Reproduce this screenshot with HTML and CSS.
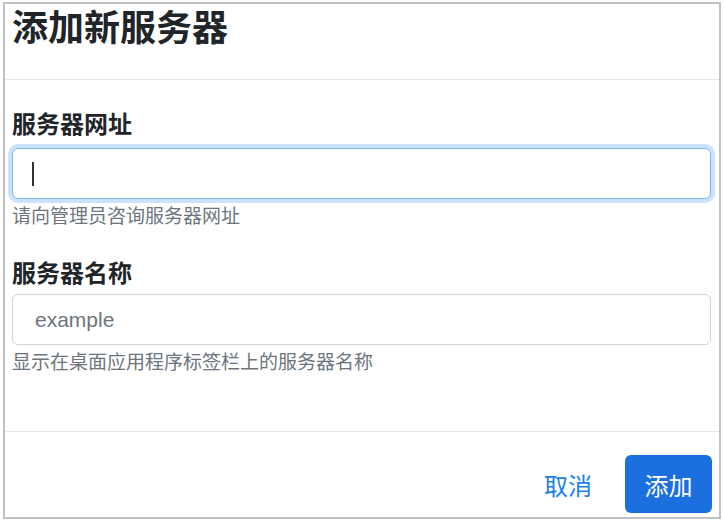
FILE: index.html
```html
<!DOCTYPE html>
<html lang="zh-CN">
<head>
<meta charset="utf-8">
<title>添加新服务器</title>
<link rel="stylesheet" href="styles.css">
</head>
<body>
<div class="modal">
  <div class="modal-header">
    <h4 class="modal-title">添加新服务器</h4>
  </div>
  <div class="modal-body">
    <div class="group first">
      <label class="label">服务器网址</label>
      <div class="field">
        <input class="input focused" type="text">
        <span class="caret"></span>
      </div>
      <div class="help">请向管理员咨询服务器网址</div>
    </div>
    <div class="group second">
      <label class="label">服务器名称</label>
      <div class="field">
        <input class="input" type="text" placeholder="example">
      </div>
      <div class="help">显示在桌面应用程序标签栏上的服务器名称</div>
    </div>
  </div>
  <div class="modal-footer">
    <button class="btn-link" type="button">取消</button>
    <button class="btn-primary" type="button">添加</button>
  </div>
</div>
</body>
</html>
```

FILE: styles.css
```css
* { box-sizing: border-box; }

html, body {
  margin: 0;
  padding: 0;
  background: #ffffff;
}

body {
  font-family: "Liberation Sans", "Noto Sans CJK SC", sans-serif;
  color: #212529;
}

.modal {
  margin: 2px 0 0 3px;
  width: 718px;
  height: 517px;
  border: 2px solid #c1c1c1;
  display: flex;
  flex-direction: column;
  background: #fff;
}

.modal-header {
  padding: 3px 7px 0 7px;
  height: 76px;
  border-bottom: 1px solid #e3e6ea;
}

.modal-title {
  margin: 0;
  font-size: 36px;
  line-height: 36px;
  font-weight: 700;
  font-family: "Noto Sans CJK SC", sans-serif;
  color: #212529;
}

.modal-body {
  flex: 1;
  padding: 31px 7px 0 7px;
}

.group {
  display: flex;
  flex-direction: column;
}

.group.second {
  margin-top: 36px;
}

.label {
  font-family: "Noto Sans CJK SC", sans-serif;
  font-size: 24px;
  line-height: 24px;
  font-weight: 700;
  color: #212529;
  margin-bottom: 13px;
}

.group.second .label {
  margin-bottom: 10px;
}

.field {
  position: relative;
}

.input {
  display: block;
  width: 699px;
  height: 51px;
  border: 1px solid #ced4da;
  border-radius: 6px;
  padding: 0 22px;
  font-family: "Liberation Sans", sans-serif;
  font-size: 21px;
  color: #495057;
  background: #fff;
  outline: none;
}

.input::placeholder {
  color: #6c757d;
}

.input.focused {
  border: 1.5px solid #82b6f4;
  box-shadow: 0 0 0 4px #cce3fd;
}

.caret {
  position: absolute;
  left: 20px;
  top: 14px;
  width: 1.5px;
  height: 24px;
  background: #333;
}

.help {
  font-family: "Noto Sans CJK SC", sans-serif;
  font-size: 19px;
  line-height: 19px;
  color: #6c757d;
  margin-top: 6px;
}

.modal-footer {
  height: 86px;
  border-top: 1px solid #e3e6ea;
  display: flex;
  justify-content: flex-end;
  align-items: flex-start;
  padding: 23px 7px 0 0;
  gap: 33px;
}

.btn-link {
  border: none;
  background: none;
  padding: 0;
  height: 58px;
  font-family: "Noto Sans CJK SC", sans-serif;
  font-size: 24px;
  color: #1a7fe8;
  cursor: pointer;
}

.btn-primary {
  border: none;
  width: 87px;
  height: 58px;
  border-radius: 6px;
  background: #1b6fdf;
  color: #fff;
  font-family: "Noto Sans CJK SC", sans-serif;
  font-size: 24px;
  padding: 0;
  cursor: pointer;
}
```
